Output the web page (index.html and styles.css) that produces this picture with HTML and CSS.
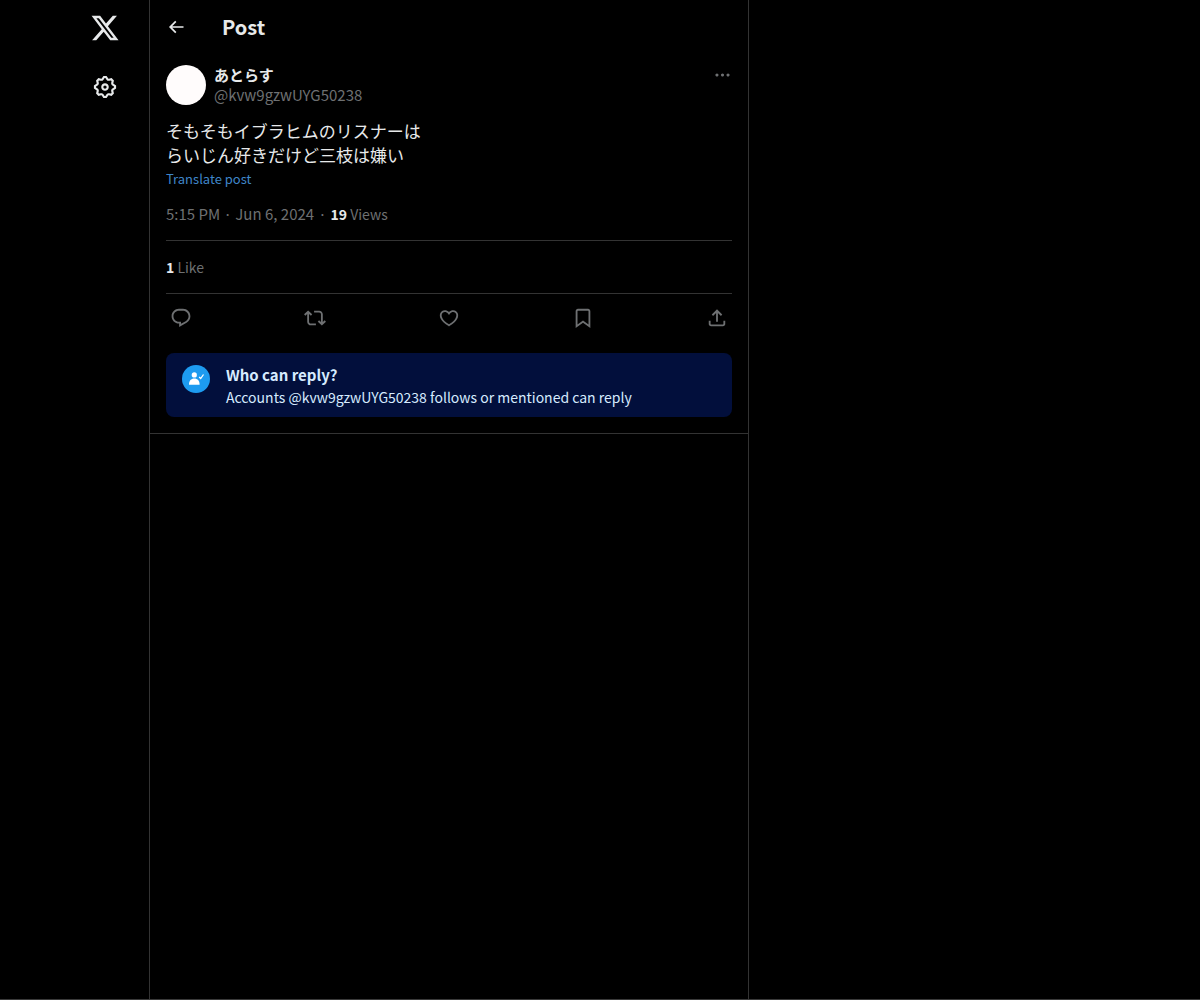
FILE: index.html
```html
<!DOCTYPE html>
<html lang="en">

<head>
    <meta charset="UTF-8">
    <meta name="viewport" content="width=device-width, initial-scale=1.0">
    <title>Post / X</title>
    <link rel="stylesheet" href="styles.css">
</head>

<body>
    <div class="layout">
        <header class="sidebar">
            <a href="#" class="nav-link" aria-label="X">
                <svg class="logo" viewBox="0 0 24 24"><path d="M18.244 2.25h3.308l-7.227 8.26 8.502 11.24H16.17l-5.214-6.817L4.99 21.75H1.68l7.73-8.835L1.254 2.25H8.08l4.713 6.231zm-1.161 17.52h1.833L7.084 4.126H5.117z"/></svg>
            </a>
            <a href="#" class="nav-link" aria-label="Settings">
                <svg class="gear" viewBox="0 0 24 24"><path d="M10.54 1.75h2.92l1.57 2.36c.11.17.32.25.53.21l2.53-.59 2.17 2.17-.58 2.54c-.05.2.04.41.21.53l2.36 1.57v2.92l-2.36 1.57c-.17.12-.26.33-.21.53l.58 2.54-2.17 2.17-2.53-.59c-.21-.04-.42.04-.53.21l-1.57 2.36h-2.92l-1.58-2.36c-.11-.17-.32-.25-.52-.21l-2.54.59-2.17-2.17.58-2.54c.05-.2-.03-.41-.21-.53l-2.35-1.57v-2.92L4.1 8.97c.18-.12.26-.33.21-.53L3.73 5.9 5.9 3.73l2.54.59c.2.04.41-.04.52-.21l1.58-2.36zm1.07 2l-.98 1.47C10.05 6.08 9 6.5 7.99 6.27l-1.46-.34-.6.6.33 1.46c.24 1.01-.18 2.07-1.05 2.64l-1.46.98v.78l1.46.98c.87.57 1.29 1.63 1.05 2.64l-.33 1.46.6.6 1.46-.34c1.01-.23 2.06.19 2.64 1.05l.98 1.47h.78l.97-1.47c.58-.86 1.63-1.28 2.65-1.05l1.45.34.61-.6-.34-1.46c-.23-1.01.18-2.07 1.05-2.64l1.47-.98v-.78l-1.47-.98c-.87-.57-1.28-1.63-1.05-2.64l.34-1.46-.61-.6-1.45.34c-1.02.23-2.07-.19-2.65-1.05l-.97-1.47h-.78zM12 10.5c-.83 0-1.5.67-1.5 1.5s.67 1.5 1.5 1.5c.83 0 1.5-.67 1.5-1.5s-.67-1.5-1.5-1.5zM8.5 12c0-1.93 1.56-3.5 3.5-3.5 1.93 0 3.5 1.57 3.5 3.5s-1.57 3.5-3.5 3.5c-1.94 0-3.5-1.57-3.5-3.5z"/></svg>
            </a>
        </header>

        <main class="column">
            <div class="top-bar">
                <button type="button" class="back" aria-label="Back">
                    <svg viewBox="0 0 24 24"><path d="M7.414 13l5.043 5.04-1.414 1.42L3.586 12l7.457-7.46 1.414 1.42L7.414 11H21v2H7.414z"/></svg>
                </button>
                <h1>Post</h1>
            </div>

            <article class="post">
                <div class="author">
                    <a href="#" class="avatar" aria-label="あとらす"></a>
                    <div class="names">
                        <a href="#" class="name" lang="ja">あとらす</a>
                        <a href="#" class="handle">@kvw9gzwUYG50238</a>
                    </div>
                    <button type="button" class="more" aria-label="More">
                        <svg viewBox="0 0 24 24"><path d="M3 12c0-1.1.9-2 2-2s2 .9 2 2-.9 2-2 2-2-.9-2-2zm9 2c1.1 0 2-.9 2-2s-.9-2-2-2-2 .9-2 2 .9 2 2 2zm7 0c1.1 0 2-.9 2-2s-.9-2-2-2-2 .9-2 2 .9 2 2 2z"/></svg>
                    </button>
                </div>

                <p class="text" lang="ja">そもそもイブラヒムのリスナーは<br>らいじん好きだけど三枝は嫌い</p>
                <button type="button" class="translate">Translate post</button>

                <div class="meta">
                    <a href="#">5:15 PM · Jun 6, 2024</a>
                    <span>·</span>
                    <span class="count"><strong>19</strong> Views</span>
                </div>
                <div class="likes"><a href="#" class="count"><strong>1</strong> Like</a></div>

                <div class="actions">
                    <button type="button" aria-label="Reply">
                        <svg viewBox="0 0 24 24"><path d="M1.751 10c0-4.42 3.584-8 8.005-8h4.366c4.49 0 8.129 3.64 8.129 8.13 0 2.96-1.607 5.68-4.196 7.11l-8.054 4.46v-3.69h-.067c-4.49.1-8.183-3.51-8.183-8.01zm8.005-6c-3.317 0-6.005 2.69-6.005 6 0 3.37 2.77 6.08 6.138 6.01l.351-.01h1.761v2.3l5.087-2.81c1.951-1.08 3.163-3.13 3.163-5.36 0-3.39-2.744-6.13-6.129-6.13H9.756z"/></svg>
                    </button>
                    <button type="button" aria-label="Repost">
                        <svg viewBox="0 0 24 24"><path d="M4.5 3.88l4.432 4.14-1.364 1.46L5.5 7.55V16c0 1.1.896 2 2 2H13v2H7.5c-2.209 0-4-1.79-4-4V7.55L1.432 9.48.068 8.02 4.5 3.88zM16.5 6H11V4h5.5c2.209 0 4 1.79 4 4v8.45l2.068-1.93 1.364 1.46-4.432 4.14-4.432-4.14 1.364-1.46 2.068 1.93V8c0-1.1-.896-2-2-2z"/></svg>
                    </button>
                    <button type="button" aria-label="Like">
                        <svg viewBox="0 0 24 24"><path d="M16.697 5.5c-1.222-.06-2.679.51-3.89 2.16l-.805 1.09-.806-1.09C9.984 6.01 8.526 5.44 7.304 5.5c-1.243.07-2.349.78-2.91 1.91-.552 1.12-.633 2.78.479 4.82 1.074 1.97 3.257 4.27 7.129 6.61 3.87-2.34 6.052-4.64 7.126-6.61 1.111-2.04 1.03-3.7.477-4.82-.561-1.13-1.666-1.84-2.908-1.91zm4.187 7.69c-1.351 2.48-4.001 5.12-8.379 7.67l-.503.3-.504-.3c-4.379-2.55-7.029-5.19-8.382-7.67-1.36-2.5-1.41-4.86-.514-6.67.887-1.79 2.647-2.91 4.601-3.01 1.651-.09 3.368.56 4.798 2.01 1.429-1.45 3.146-2.1 4.796-2.01 1.954.1 3.714 1.22 4.601 3.01.896 1.81.846 4.17-.514 6.67z"/></svg>
                    </button>
                    <button type="button" aria-label="Bookmark">
                        <svg viewBox="0 0 24 24"><path d="M4 4.5C4 3.12 5.119 2 6.5 2h11C18.881 2 20 3.12 20 4.5v18.44l-8-5.71-8 5.71V4.5zM6.5 4c-.276 0-.5.22-.5.5v14.56l6-4.29 6 4.29V4.5c0-.28-.224-.5-.5-.5h-11z"/></svg>
                    </button>
                    <button type="button" aria-label="Share">
                        <svg viewBox="0 0 24 24"><path d="M12 2.59l5.7 5.7-1.41 1.42L13 6.41V16h-2V6.41l-3.3 3.3-1.41-1.42L12 2.59zM21 15l-.02 3.51c0 1.38-1.12 2.49-2.5 2.49H5.5C4.11 21 3 19.88 3 18.5V15h2v3.5c0 .28.22.5.5.5h12.98c.28 0 .5-.22.5-.5L19 15h2z"/></svg>
                    </button>
                </div>

                <div class="reply-info">
                    <svg class="badge" viewBox="0 0 28 28">
                        <circle cx="14" cy="14" r="14" fill="#1d9bf0"/>
                        <circle cx="12.3" cy="9.9" r="2.6" fill="#fff"/>
                        <path d="M7 19.700c0-4.200 2-6.300 5.300-6.300s5.300 2.100 5.300 6.300z" fill="#fff"/>
                        <path d="M17.200 12l1.500 1.500 2.800-4" fill="none" stroke="#fff" stroke-width="1.300"/>
                    </svg>
                    <div>
                        <h2>Who can reply?</h2>
                        <p>Accounts @kvw9gzwUYG50238 follows or mentioned can reply</p>
                    </div>
                </div>
            </article>
        </main>
    </div>
</body>

</html>
```

FILE: styles.css
```css
* {
    box-sizing: border-box;
}

body {
    margin: 0;
    background-color: #000;
    color: #e7e9ea;
    font-family: "Noto Sans CJK JP", "Noto Sans", sans-serif;
    font-size: 15px;
    line-height: 20px;
}

h1,
h2,
p {
    margin: 0;
}

a {
    color: inherit;
    text-decoration: none;
}

button {
    padding: 0;
    border: 0;
    background: none;
    color: inherit;
    font: inherit;
    cursor: pointer;
}

svg {
    display: block;
    fill: currentColor;
}

.layout {
    display: grid;
    grid-template-columns: 149px minmax(0, 600px) 1fr;
    min-height: 100vh;
    border-bottom: 1px solid #3a3a3a;
}

.sidebar {
    display: flex;
    flex-direction: column;
    align-items: flex-end;
    gap: 7px;
    padding: 2px 18px;
}

.nav-link {
    display: flex;
    align-items: center;
    justify-content: center;
    width: 52px;
    height: 52px;
}

.logo {
    width: 30px;
}

.gear {
    width: 26px;
}

.column {
    border-left: 1px solid #333;
    border-right: 1px solid #333;
}

.top-bar {
    display: flex;
    align-items: center;
    gap: 36px;
    height: 53px;
    padding: 0 16px;
}

.back svg {
    width: 20px;
}

.top-bar h1 {
    font-size: 20px;
    line-height: 24px;
}

.post {
    padding: 12px 16px 16px;
    border-bottom: 1px solid #333;
}

.author {
    display: flex;
    align-items: flex-start;
    gap: 8px;
    margin-bottom: 14px;
}

.avatar {
    width: 40px;
    height: 40px;
    border-radius: 50%;
    background-color: #fffcfc;
}

.names {
    flex: 1;
    display: flex;
    flex-direction: column;
    align-items: flex-start;
}

.name {
    font-weight: bold;
}

.handle,
.more,
.meta,
.likes,
.actions {
    color: #6e7072;
}

.more svg {
    width: 19px;
    height: 20px;
}

.text {
    font-size: 17px;
    line-height: 24px;
}

.translate {
    display: block;
    margin: 4px 0 17px;
    color: #3f86c9;
    font-size: 13px;
    line-height: 16px;
}

.meta {
    display: flex;
    gap: 4px;
    padding-bottom: 16px;
}

.likes {
    padding: 16px 0;
    border-top: 1px solid #333;
    border-bottom: 1px solid #333;
}

.count {
    display: block;
    font-size: 14px;
}

.count strong {
    color: #e7e9ea;
}

.actions {
    display: flex;
    align-items: center;
    justify-content: space-between;
    height: 47px;
    padding: 0 4px;
}

.actions svg {
    width: 22px;
}

.reply-info {
    display: flex;
    gap: 16px;
    margin-top: 12px;
    padding: 12px 16px;
    border-radius: 8px;
    background-color: #020f3c;
    color: #d6ebff;
}

.badge {
    width: 28px;
    height: 28px;
}

.reply-info h2 {
    font-size: 15px;
    line-height: 20px;
}

.reply-info p {
    margin-top: 4px;
    font-size: 14px;
    line-height: 16px;
}
```
